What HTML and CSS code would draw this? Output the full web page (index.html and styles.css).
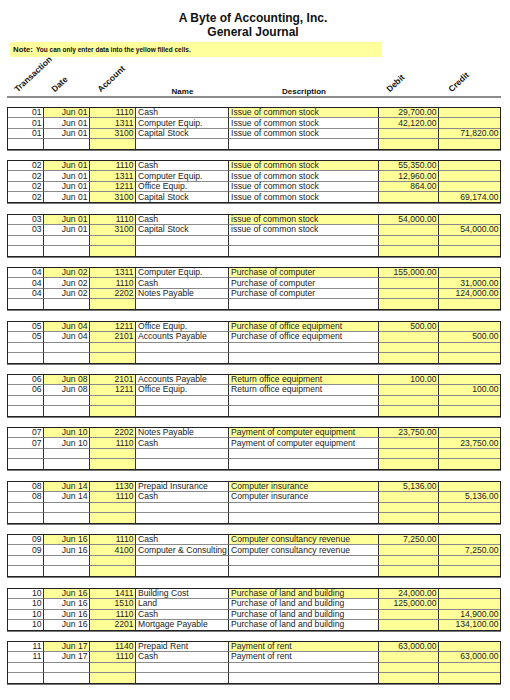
FILE: index.html
```html
<!DOCTYPE html>
<html>
<head>
<meta charset="utf-8">
<link rel="stylesheet" href="styles.css">
</head>
<body>
<div class="page">
  <div class="title">A Byte of Accounting, Inc.<br>General Journal</div>
  <div class="note"><b class="note-k">Note:</b><span class="note-t">You can only enter data into the yellow filled cells.</span></div>

  <div class="hdr">
    <div class="h"><span class="rot">Transaction</span></div>
    <div class="h"><span class="rot">Date</span></div>
    <div class="h"><span class="rot">Account</span></div>
    <div class="h hc">Name</div>
    <div class="h hc">Description</div>
    <div class="h"><span class="rot">Debit</span></div>
    <div class="h"><span class="rot rot-cr">Credit</span></div>
  </div>

  <div class="g">
    <div class="c r">01</div><div class="c r y">Jun 01</div><div class="c r y">1110</div><div class="c">Cash</div><div class="c y">Issue of common stock</div><div class="c r y">29,700.00</div><div class="c r y"></div>
    <div class="c r">01</div><div class="c r">Jun 01</div><div class="c r y">1311</div><div class="c">Computer Equip.</div><div class="c">Issue of common stock</div><div class="c r y">42,120.00</div><div class="c r y"></div>
    <div class="c r">01</div><div class="c r">Jun 01</div><div class="c r y">3100</div><div class="c">Capital Stock</div><div class="c">Issue of common stock</div><div class="c r y"></div><div class="c r y">71,820.00</div>
    <div class="c r"></div><div class="c r"></div><div class="c r y"></div><div class="c"></div><div class="c"></div><div class="c r y"></div><div class="c r y"></div>
  </div>

  <div class="g">
    <div class="c r">02</div><div class="c r y">Jun 01</div><div class="c r y">1110</div><div class="c">Cash</div><div class="c y">Issue of common stock</div><div class="c r y">55,350.00</div><div class="c r y"></div>
    <div class="c r">02</div><div class="c r">Jun 01</div><div class="c r y">1311</div><div class="c">Computer Equip.</div><div class="c">Issue of common stock</div><div class="c r y">12,960.00</div><div class="c r y"></div>
    <div class="c r">02</div><div class="c r">Jun 01</div><div class="c r y">1211</div><div class="c">Office Equip.</div><div class="c">Issue of common stock</div><div class="c r y">864.00</div><div class="c r y"></div>
    <div class="c r">02</div><div class="c r">Jun 01</div><div class="c r y">3100</div><div class="c">Capital Stock</div><div class="c">Issue of common stock</div><div class="c r y"></div><div class="c r y">69,174.00</div>
  </div>

  <div class="g">
    <div class="c r">03</div><div class="c r y">Jun 01</div><div class="c r y">1110</div><div class="c">Cash</div><div class="c y">issue of common stock</div><div class="c r y">54,000.00</div><div class="c r y"></div>
    <div class="c r">03</div><div class="c r">Jun 01</div><div class="c r y">3100</div><div class="c">Capital Stock</div><div class="c">issue of common stock</div><div class="c r y"></div><div class="c r y">54,000.00</div>
    <div class="c r"></div><div class="c r"></div><div class="c r y"></div><div class="c"></div><div class="c"></div><div class="c r y"></div><div class="c r y"></div>
    <div class="c r"></div><div class="c r"></div><div class="c r y"></div><div class="c"></div><div class="c"></div><div class="c r y"></div><div class="c r y"></div>
  </div>

  <div class="g">
    <div class="c r">04</div><div class="c r y">Jun 02</div><div class="c r y">1311</div><div class="c">Computer Equip.</div><div class="c y">Purchase of computer</div><div class="c r y">155,000.00</div><div class="c r y"></div>
    <div class="c r">04</div><div class="c r">Jun 02</div><div class="c r y">1110</div><div class="c">Cash</div><div class="c">Purchase of computer</div><div class="c r y"></div><div class="c r y">31,000.00</div>
    <div class="c r">04</div><div class="c r">Jun 02</div><div class="c r y">2202</div><div class="c">Notes Payable</div><div class="c">Purchase of computer</div><div class="c r y"></div><div class="c r y">124,000.00</div>
    <div class="c r"></div><div class="c r"></div><div class="c r y"></div><div class="c"></div><div class="c"></div><div class="c r y"></div><div class="c r y"></div>
  </div>

  <div class="g">
    <div class="c r">05</div><div class="c r y">Jun 04</div><div class="c r y">1211</div><div class="c">Office Equip.</div><div class="c y">Purchase of office equipment</div><div class="c r y">500.00</div><div class="c r y"></div>
    <div class="c r">05</div><div class="c r">Jun 04</div><div class="c r y">2101</div><div class="c">Accounts Payable</div><div class="c">Purchase of office equipment</div><div class="c r y"></div><div class="c r y">500.00</div>
    <div class="c r"></div><div class="c r"></div><div class="c r y"></div><div class="c"></div><div class="c"></div><div class="c r y"></div><div class="c r y"></div>
    <div class="c r"></div><div class="c r"></div><div class="c r y"></div><div class="c"></div><div class="c"></div><div class="c r y"></div><div class="c r y"></div>
  </div>

  <div class="g">
    <div class="c r">06</div><div class="c r y">Jun 08</div><div class="c r y">2101</div><div class="c">Accounts Payable</div><div class="c y">Return office equipment</div><div class="c r y">100.00</div><div class="c r y"></div>
    <div class="c r">06</div><div class="c r">Jun 08</div><div class="c r y">1211</div><div class="c">Office Equip.</div><div class="c">Return office equipment</div><div class="c r y"></div><div class="c r y">100.00</div>
    <div class="c r"></div><div class="c r"></div><div class="c r y"></div><div class="c"></div><div class="c"></div><div class="c r y"></div><div class="c r y"></div>
    <div class="c r"></div><div class="c r"></div><div class="c r y"></div><div class="c"></div><div class="c"></div><div class="c r y"></div><div class="c r y"></div>
  </div>

  <div class="g">
    <div class="c r">07</div><div class="c r y">Jun 10</div><div class="c r y">2202</div><div class="c">Notes Payable</div><div class="c y">Payment of computer equipment</div><div class="c r y">23,750.00</div><div class="c r y"></div>
    <div class="c r">07</div><div class="c r">Jun 10</div><div class="c r y">1110</div><div class="c">Cash</div><div class="c">Payment of computer equipment</div><div class="c r y"></div><div class="c r y">23,750.00</div>
    <div class="c r"></div><div class="c r"></div><div class="c r y"></div><div class="c"></div><div class="c"></div><div class="c r y"></div><div class="c r y"></div>
    <div class="c r"></div><div class="c r"></div><div class="c r y"></div><div class="c"></div><div class="c"></div><div class="c r y"></div><div class="c r y"></div>
  </div>

  <div class="g">
    <div class="c r">08</div><div class="c r y">Jun 14</div><div class="c r y">1130</div><div class="c">Prepaid Insurance</div><div class="c y">Computer insurance</div><div class="c r y">5,136.00</div><div class="c r y"></div>
    <div class="c r">08</div><div class="c r">Jun 14</div><div class="c r y">1110</div><div class="c">Cash</div><div class="c">Computer insurance</div><div class="c r y"></div><div class="c r y">5,136.00</div>
    <div class="c r"></div><div class="c r"></div><div class="c r y"></div><div class="c"></div><div class="c"></div><div class="c r y"></div><div class="c r y"></div>
    <div class="c r"></div><div class="c r"></div><div class="c r y"></div><div class="c"></div><div class="c"></div><div class="c r y"></div><div class="c r y"></div>
  </div>

  <div class="g">
    <div class="c r">09</div><div class="c r y">Jun 16</div><div class="c r y">1110</div><div class="c">Cash</div><div class="c y">Computer consultancy revenue</div><div class="c r y">7,250.00</div><div class="c r y"></div>
    <div class="c r">09</div><div class="c r">Jun 16</div><div class="c r y">4100</div><div class="c">Computer &amp; Consulting</div><div class="c">Computer consultancy revenue</div><div class="c r y"></div><div class="c r y">7,250.00</div>
    <div class="c r"></div><div class="c r"></div><div class="c r y"></div><div class="c"></div><div class="c"></div><div class="c r y"></div><div class="c r y"></div>
    <div class="c r"></div><div class="c r"></div><div class="c r y"></div><div class="c"></div><div class="c"></div><div class="c r y"></div><div class="c r y"></div>
  </div>

  <div class="g">
    <div class="c r">10</div><div class="c r y">Jun 16</div><div class="c r y">1411</div><div class="c">Building Cost</div><div class="c y">Purchase of land and building</div><div class="c r y">24,000.00</div><div class="c r y"></div>
    <div class="c r">10</div><div class="c r">Jun 16</div><div class="c r y">1510</div><div class="c">Land</div><div class="c">Purchase of land and building</div><div class="c r y">125,000.00</div><div class="c r y"></div>
    <div class="c r">10</div><div class="c r">Jun 16</div><div class="c r y">1110</div><div class="c">Cash</div><div class="c">Purchase of land and building</div><div class="c r y"></div><div class="c r y">14,900.00</div>
    <div class="c r">10</div><div class="c r">Jun 16</div><div class="c r y">2201</div><div class="c">Mortgage Payable</div><div class="c">Purchase of land and building</div><div class="c r y"></div><div class="c r y">134,100.00</div>
  </div>

  <div class="g">
    <div class="c r">11</div><div class="c r y">Jun 17</div><div class="c r y">1140</div><div class="c">Prepaid Rent</div><div class="c y">Payment of rent</div><div class="c r y">63,000.00</div><div class="c r y"></div>
    <div class="c r">11</div><div class="c r">Jun 17</div><div class="c r y">1110</div><div class="c">Cash</div><div class="c">Payment of rent</div><div class="c r y"></div><div class="c r y">63,000.00</div>
    <div class="c r"></div><div class="c r"></div><div class="c r y"></div><div class="c"></div><div class="c"></div><div class="c r y"></div><div class="c r y"></div>
    <div class="c r"></div><div class="c r"></div><div class="c r y"></div><div class="c"></div><div class="c"></div><div class="c r y"></div><div class="c r y"></div>
  </div>
</div>
</body>
</html>
```

FILE: styles.css
```css
html, body {
  margin: 0;
  padding: 0;
  background: #ffffff;
}

.page {
  width: 494px;
  padding: 0 9px 0 7px;
  font-family: "Liberation Sans", Arial, sans-serif;
  color: #222;
}

.title {
  padding-top: 11px;
  font-size: 12px;
  line-height: 14px;
  font-weight: bold;
  text-align: center;
  color: #111;
  margin-left: -2px;
}

.note {
  margin-top: 3px;
  margin-left: 3px;
  width: 369px;
  height: 15px;
  padding-left: 3px;
  background: #ffff9c;
  display: flex;
  align-items: center;
  white-space: nowrap;
  color: #111;
}

.note-k {
  font-size: 7.8px;
  font-weight: bold;
  margin-right: 3px;
}

.note-t {
  font-size: 6.5px;
  font-weight: bold;
}

.hdr {
  display: grid;
  grid-template-columns: 37px 46px 46px 93px 150px 60px 62px;
  height: 39px;
  border-bottom: 2px solid #8c8c8c;
  margin-bottom: 9px;
}

.h {
  display: flex;
  align-items: flex-end;
  padding-bottom: 2.5px;
  font-size: 8.5px;
  line-height: 9px;
  font-weight: bold;
  color: #111;
  white-space: nowrap;
}

.hc {
  justify-content: center;
  padding-bottom: 0;
  font-size: 8px;
}

.rot {
  display: block;
  margin-left: 12px;
  transform-origin: 0 100%;
  transform: rotate(-43deg);
}

.rot-cr {
  margin-left: 14px;
}

.g {
  display: grid;
  grid-template-columns: 36px 46px 46px 93px 150px 60px 61px;
  grid-template-rows: 10px 11px 10px 10px;
  border: 1px solid #222;
  box-shadow: 0 1px 0 #777;
  margin-bottom: 10.4px;
}

.c {
  box-sizing: border-box;
  display: flex;
  align-items: center;
  padding: 0 1.5px 0 2px;
  border-right: 1px solid #333;
  border-bottom: 1px solid #8a8a8a;
  font-size: 8.6px;
  line-height: 9px;
  white-space: nowrap;
  overflow: visible;
  background: #ffffff;
}

.c:nth-child(7n) {
  border-right: none;
}

.c:nth-last-child(-n+7) {
  border-bottom: none;
}

.r {
  justify-content: flex-end;
}

.y {
  background: #ffff99;
}
```
